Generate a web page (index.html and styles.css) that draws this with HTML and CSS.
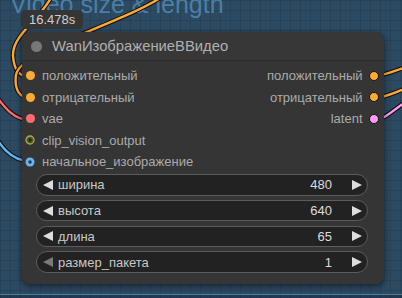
FILE: index.html
```html
<!DOCTYPE html>
<html>
<head>
<meta charset="utf-8">
<link rel="stylesheet" href="styles.css">
</head>
<body>
<div class="canvas">
  <div class="group"><div class="group-title">Video size &amp; length</div></div>
  <svg class="wires" width="402" height="298" viewBox="0 0 402 298">
    <g fill="none" stroke-linecap="round">
      <path class="wo" d="M52,-4 C40,20 12,35 13,56 C14,70 20,77 30,77"/>
      <path class="wc" stroke="#ffa931" d="M52,-4 C40,20 12,35 13,56 C14,70 20,77 30,77"/>
      <path class="wo" d="M165,-5 C120,25 20,50 16,75 C14,90 20,98 30,98"/>
      <path class="wc" stroke="#ffa931" d="M165,-5 C120,25 20,50 16,75 C14,90 20,98 30,98"/>
      <path class="wo" d="M-10,88 C0,100 10,120 30,120"/>
      <path class="wc" stroke="#ff6e6e" d="M-10,88 C0,100 10,120 30,120"/>
      <path class="wo" d="M-10,128 C0,145 10,161 30,161"/>
      <path class="wc" stroke="#64b5f6" d="M-10,128 C0,145 10,161 30,161"/>
      <path class="wo" d="M374,76 C385,76 395,70 410,66"/>
      <path class="wc" stroke="#ffa931" d="M374,76 C385,76 395,70 410,66"/>
      <path class="wo" d="M374,98 C385,98 395,92 410,87"/>
      <path class="wc" stroke="#ffa931" d="M374,98 C385,98 395,92 410,87"/>
      <path class="wo" d="M374,120 C385,120 395,108 410,99"/>
      <path class="wc" stroke="#ff9cf9" d="M374,120 C385,120 395,108 410,99"/>
    </g>
  </svg>
  <div class="node-wrap">
    <div class="badge">16.478s</div>
    <div class="node">
      <div class="title"><span class="title-dot"></span><span class="title-text">WanИзображениеВВидео</span></div>
      <div class="slots">
        <div class="slot-row">
          <div class="in"><span class="dot orange"></span>положительный</div>
          <div class="out">положительный<span class="odot orange"></span></div>
        </div>
        <div class="slot-row">
          <div class="in"><span class="dot orange"></span>отрицательный</div>
          <div class="out">отрицательный<span class="odot orange"></span></div>
        </div>
        <div class="slot-row">
          <div class="in"><span class="dot red"></span>vae</div>
          <div class="out">latent<span class="odot pink"></span></div>
        </div>
        <div class="slot-row">
          <div class="in"><svg class="sdot" width="10" height="10" viewBox="0 0 10 10"><circle cx="5" cy="5" r="4" fill="#4a5a2c" stroke="#b0a845" stroke-width="1.3"/><circle cx="5" cy="5" r="1.7" fill="#22261c"/></svg>clip_vision_output</div>
        </div>
        <div class="slot-row">
          <div class="in"><svg class="sdot" width="10" height="10" viewBox="0 0 10 10"><circle cx="5" cy="5" r="4.5" fill="#64b5f6"/><circle cx="5" cy="5" r="1.7" fill="#353535"/></svg>начальное_изображение</div>
        </div>
      </div>
      <div class="widgets">
        <div class="widget">
          <svg class="arr" width="10" height="10" viewBox="0 0 10 10"><polygon points="10,0 10,10 0,5" fill="#dddddd"/></svg>
          <span class="w-label">ширина</span>
          <span class="w-value">480</span>
          <svg class="arr arr-r" width="10" height="10" viewBox="0 0 10 10"><polygon points="0,0 0,10 10,5" fill="#dddddd"/></svg>
        </div>
        <div class="widget">
          <svg class="arr" width="10" height="10" viewBox="0 0 10 10"><polygon points="10,0 10,10 0,5" fill="#dddddd"/></svg>
          <span class="w-label">высота</span>
          <span class="w-value">640</span>
          <svg class="arr arr-r" width="10" height="10" viewBox="0 0 10 10"><polygon points="0,0 0,10 10,5" fill="#dddddd"/></svg>
        </div>
        <div class="widget">
          <svg class="arr" width="10" height="10" viewBox="0 0 10 10"><polygon points="10,0 10,10 0,5" fill="#dddddd"/></svg>
          <span class="w-label">длина</span>
          <span class="w-value">65</span>
          <svg class="arr arr-r" width="10" height="10" viewBox="0 0 10 10"><polygon points="0,0 0,10 10,5" fill="#dddddd"/></svg>
        </div>
        <div class="widget">
          <svg class="arr" width="10" height="10" viewBox="0 0 10 10"><polygon points="10,0 10,10 0,5" fill="#7a7a7a"/></svg>
          <span class="w-label">размер_пакета</span>
          <span class="w-value">1</span>
          <svg class="arr arr-r" width="10" height="10" viewBox="0 0 10 10"><polygon points="0,0 0,10 10,5" fill="#dddddd"/></svg>
        </div>
      </div>
    </div>
  </div>
</div>
</body>
</html>
```

FILE: styles.css
```css
* { box-sizing: border-box; }
html, body { margin: 0; padding: 0; }
body {
  font-family: "Liberation Sans", Arial, sans-serif;
  background: #223a4d;
}
.canvas {
  position: relative;
  width: 402px;
  height: 298px;
  overflow: hidden;
  background-color: #223a4d;
  background-image:
    linear-gradient(to right, rgba(0,0,0,0.12) 1px, transparent 1px),
    linear-gradient(to bottom, rgba(0,0,0,0.12) 1px, transparent 1px);
  background-size: 10px 10px;
}
.group {
  position: absolute;
  left: -10px;
  top: -40px;
  width: 430px;
  height: 335px;
  padding: 32px 20px 0;
  background-color: #2c4a62;
  background-image:
    linear-gradient(to right, rgba(0,0,0,0.10) 1px, transparent 1px),
    linear-gradient(to bottom, rgba(0,0,0,0.10) 1px, transparent 1px);
  background-size: 10px 10px;
  background-position: 10px 0;
  border-bottom: 1px solid #4a80a6;
}
.group-title {
  font-size: 25px;
  line-height: 25px;
  color: #4b7fa5;
  white-space: nowrap;
}
.wires {
  position: absolute;
  left: 0;
  top: 0;
}
.wo { stroke: #111; stroke-width: 4.5; }
.wc { stroke-width: 2.4; }
.node-wrap {
  position: absolute;
  left: 21px;
  top: 10px;
  display: flex;
  flex-direction: column;
  align-items: flex-start;
}
.badge {
  height: 19px;
  line-height: 19px;
  padding: 0 8px;
  font-size: 13px;
  color: #cfcfcf;
  background: #353535;
  border-radius: 5px;
}
.node {
  margin-top: 3px;
  margin-left: 1px;
  width: 362px;
  height: 252px;
  background: #353535;
  border-radius: 8px;
  box-shadow: 0 2px 6px rgba(0,0,0,0.55);
  display: flex;
  flex-direction: column;
}
.title {
  height: 29px;
  display: flex;
  align-items: center;
  padding-left: 9px;
  border-bottom: 1px solid #2a2a2a;
  border-radius: 8px 8px 0 0;
  background: #373737;
}
.title-dot {
  width: 11px;
  height: 11px;
  border-radius: 50%;
  background: #787878;
  flex: none;
}
.title-text {
  margin-left: 10px;
  font-size: 14.8px;
  color: #b0b0b0;
  white-space: nowrap;
}
.slots {
  padding-top: 4.3px;
  display: flex;
  flex-direction: column;
}
.slot-row {
  height: 21.4px;
  display: flex;
  align-items: center;
  justify-content: space-between;
  font-size: 13px;
  color: #ababab;
}
.in {
  display: flex;
  align-items: center;
  padding-left: 3.5px;
  white-space: nowrap;
}
.out {
  display: flex;
  align-items: center;
  padding-right: 5px;
  white-space: nowrap;
}
.dot {
  width: 9px;
  height: 9px;
  border-radius: 50%;
  margin-right: 7.5px;
  flex: none;
}
.sdot {
  margin-left: -0.5px;
  margin-right: 7px;
  flex: none;
}
.odot {
  width: 10px;
  height: 10px;
  border-radius: 50%;
  border: 1px solid #151515;
  margin-left: 6.5px;
  flex: none;
}
.orange { background: #ffa931; }
.red { background: #ff6e6e; }
.pink { background: #ff9cf9; }
.widgets {
  margin-top: 2px;
  margin-left: 14px;
  width: 332px;
  display: flex;
  flex-direction: column;
  gap: 4.3px;
}
.widget {
  height: 21.4px;
  border: 1px solid #5c5c5c;
  border-radius: 11px;
  background: #222222;
  display: flex;
  align-items: center;
  padding-left: 6px;
  padding-right: 5px;
  font-size: 13px;
}
.arr { flex: none; }
.w-label {
  margin-left: 5px;
  color: #c8c8c8;
  white-space: nowrap;
}
.w-value {
  margin-left: auto;
  color: #dddddd;
}
.arr-r { margin-left: 20px; }
```
